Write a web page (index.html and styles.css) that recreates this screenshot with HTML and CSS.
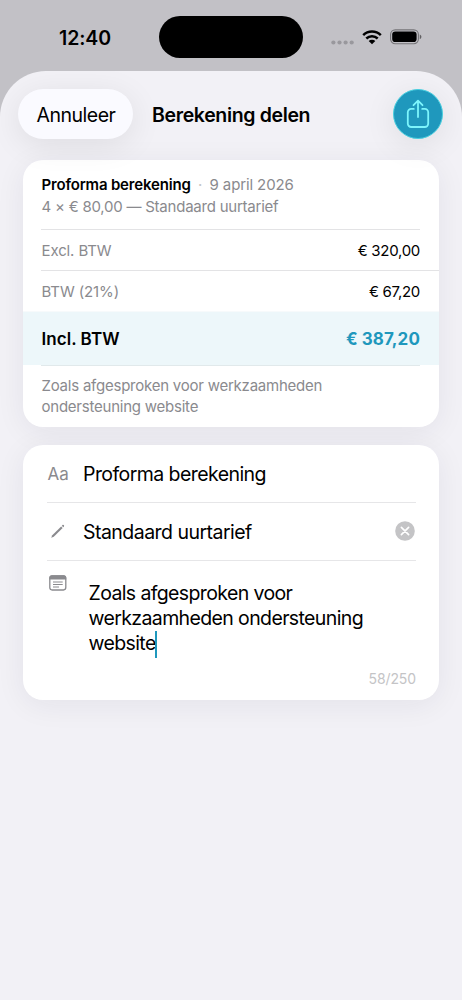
FILE: index.html
```html
<!DOCTYPE html>
<html lang="nl">
<head>
<meta charset="utf-8">
<meta name="viewport" content="width=device-width">
<title>Berekening delen</title>
<link rel="stylesheet" href="styles.css">
</head>
<body>
<div class="status">
  <div class="clock"><span class="time">12:40</span></div>
  <div class="island"></div>
  <div class="indicators">
    <svg class="dots" width="24" height="5" viewBox="0 0 24 5"><circle cx="2.4" cy="2.5" r="2.1"/><circle cx="8.5" cy="2.5" r="2.1"/><circle cx="14.6" cy="2.5" r="2.1"/><circle cx="20.7" cy="2.5" r="2.1"/></svg>
    <svg class="wifi" width="20" height="15" viewBox="0 0 20 15"><path d="M1.2 5.1a12.6 12.6 0 0 1 17.6 0M4.3 8.5a8.2 8.2 0 0 1 11.4 0" fill="none" stroke="#000" stroke-width="2.5"/><path d="M6.7 11.1a4.7 4.7 0 0 1 6.6 0L10 14.3z" fill="#000"/></svg>
    <svg class="battery" width="32" height="16" viewBox="0 0 32 16"><rect x=".6" y=".9" width="27.8" height="13.8" rx="4.6" fill="none" stroke="#000" stroke-opacity=".4" stroke-width="1.1"/><rect x="2.2" y="2.4" width="24.4" height="10.7" rx="3.1"/><path d="M29.8 5.4v4.8c1-.4 1.600-1.300 1.600-2.400s-.6-2-1.600-2.400z" fill-opacity=".5"/></svg>
  </div>
</div>
<main class="sheet">
  <header class="toolbar">
    <button class="cancel"><span class="cancel-label">Annuleer</span></button>
    <h1 class="title">Berekening delen</h1>
    <button class="share" aria-label="Deel">
      <svg width="26" height="30" viewBox="0 0 26 30" fill="none" stroke="#7df5fc" stroke-width="1.8" stroke-linecap="round" stroke-linejoin="round"><path d="M8.800 9.900H6.200a3.400 3.400 0 0 0-3.400 3.400v11.300a3.400 3.400 0 0 0 3.400 3.400h13.600a3.400 3.400 0 0 0 3.400-3.400V13.300a3.400 3.400 0 0 0-3.400-3.400h-2.600M13 18V2M8.500 6.200L13 1.700l4.500 4.500"/></svg>
    </button>
  </header>
  <section class="card summary">
    <div class="intro">
      <div class="line"><strong class="name">Proforma berekening</strong><span class="dot">·</span><span class="date">9 april 2026</span></div>
      <div class="line"><span class="detail">4 × € 80,00 — Standaard uurtarief</span></div>
    </div>
    <div class="row excl"><span class="label-excl">Excl. BTW</span><span class="amount">€ 320,00</span></div>
    <div class="row vat"><span class="label-vat">BTW (21%)</span><span class="amount">€ 67,20</span></div>
    <div class="row total"><span class="label-total">Incl. BTW</span><span class="amount-total">€ 387,20</span></div>
    <p class="remark"><span>Zoals afgesproken voor werkzaamheden</span><br><span>ondersteuning website</span></p>
  </section>
  <section class="card form">
    <div class="field">
      <span class="icon aa">Aa</span><span class="value">Proforma berekening</span>
    </div>
    <div class="field second">
      <span class="icon"><svg width="15" height="15" viewBox="0 0 16 16" fill="#8a8a8e"><path d="M1.300 14.700l1.100-2.700L11.900 2.600l1.600 1.600-9.500 9.400z"/><path d="M12.600 1.900l.8-.8c.8-.7 2.200.6 1.500 1.500l-.8.9z"/></svg></span><span class="value">Standaard uurtarief</span>
      <svg class="clear" width="20" height="20" viewBox="0 0 20 20"><circle cx="10" cy="10" r="9.800" fill="#c4c4c6"/><path d="M6.400 6.400l7.200 7.200M13.600 6.400l-7.200 7.200" stroke="#fff" stroke-width="1.700" stroke-linecap="round"/></svg>
    </div>
    <div class="note">
      <svg class="note-icon" width="18" height="16" viewBox="0 0 18 16"><rect x=".8" y=".8" width="16" height="14.200" rx="2.400" fill="none" stroke="#8a8a8e" stroke-width="1.300"/><path d="M.4 4.400V2.800A2.500 2.500 0 0 1 2.900.3h11.800a2.500 2.500 0 0 1 2.500 2.500v1.600z" fill="#8a8a8e"/><path d="M4 7h9.700M4 9.500h9.700M4 12h6" stroke="#8a8a8e" stroke-width="1"/></svg>
      <div class="note-text"><span>Zoals afgesproken voor</span><br><span>werkzaamheden ondersteuning</span><br><span>website</span><i class="caret"></i></div>
    </div>
    <div class="counter"><span>58/250</span></div>
  </section>
</main>
</body>
</html>
```

FILE: styles.css
```css
* { box-sizing: border-box; }
body {
  margin: 0;
  height: 1000px;
  overflow: hidden;
  display: flex;
  flex-direction: column;
  background: #c2c1c6;
  color: #000;
  font-family: Inter, "Liberation Sans", sans-serif;
  font-size: 15px;
}
span, strong { white-space: nowrap; }
button { border: 0; padding: 0; font: inherit; color: inherit; }
.status { height: 71px; flex: none; display: grid; grid-template-columns: 159px 144px 159px; }
.clock { padding: 26px 0 0 59px; line-height: 24px; font-size: 19.5px; font-weight: 600; }
.time { letter-spacing: -.1px; }
.island { margin-top: 16px; height: 42px; border-radius: 21px; background: #000; }
.indicators { display: flex; align-items: flex-start; padding-left: 28px; }
.dots { margin-top: 40px; fill: #99989d; flex: none; }
.wifi { margin: 30px 0 0 7px; flex: none; }
.battery { margin: 29px 0 0 8px; flex: none; }
.sheet { flex: 1; background: #f2f1f6; border-radius: 46px 46px 0 0; padding: 18px 23px 0; overflow: hidden; }
.toolbar { height: 50px; margin: 0 -5px; display: flex; align-items: center; padding-right: 1px; }
.cancel { width: 115px; height: 50px; border-radius: 25px; background: #fafaff; box-shadow: 0 6px 32px rgba(0,0,0,.085); font-size: 19.5px; padding: 2px 0 0 1px; }
.cancel-label { letter-spacing: -.5px; }
.title { margin: 0 auto 0 19px; padding-top: 2px; font-size: 19.5px; font-weight: 600; letter-spacing: -.35px; white-space: nowrap; }
.share { width: 50px; height: 50px; border-radius: 50%; background: #1f98bd; border: 1px solid #49cfdf; box-shadow: 0 6px 32px rgba(0,0,0,.085); display: grid; place-items: center; }
.card { background: #fff; border-radius: 20px; overflow: hidden; box-shadow: 0 5px 30px rgba(30,25,60,.065); }
.summary { margin-top: 21px; height: 267px; }
.intro { height: 69px; padding: 14px 0 0 18.5px; color: #8a8a8e; }
.line { display: flex; height: 21.5px; line-height: 22px; font-size: 15px; }
.name { color: #000; font-weight: 600; letter-spacing: -.18px; }
.dot { width: 19px; text-align: center; color: #c4c4c6; }
.date { letter-spacing: -.12px; }
.detail { letter-spacing: -.23px; }
.row { display: flex; justify-content: space-between; align-items: center; padding: 0 19px 0 .5px; margin-left: 18px; height: 41px; border-top: 1px solid #e3e3e5; }
.excl { margin-right: 19px; padding-right: 0; }
.label-excl, .label-vat { color: #8a8a8e; letter-spacing: -.12px; }
.amount { letter-spacing: -.28px; }
.total { height: 54px; margin: 0; padding: 0 19px 0 18.5px; background: #edf7fa; background-clip: padding-box; border-top: 1px solid #f7fafb; font-weight: 600; font-size: 17px; }
.label-total { letter-spacing: .05px; }
.amount-total { color: #1f98bd; font-weight: 700; letter-spacing: .1px; }
.remark { margin: 0 19px 0 18px; border-top: 1px solid #e1e9eb; padding: 9px 0 0 .5px; line-height: 21px; color: #8a8a8e; letter-spacing: -.23px; }
.form { margin-top: 18px; height: 255px; padding: 0 23px 0 24px; }
.field { height: 58px; display: flex; align-items: center; border-bottom: 1px solid #e6e6e8; font-size: 19.5px; }
.second { height: 57.5px; }
.value { letter-spacing: -.57px; }
.second .value { padding-top: 1px; letter-spacing: -.53px; }
.icon { width: 36px; flex: none; color: #8a8a8e; display: flex; padding-left: 3px; }
.aa { font-size: 17px; padding-left: .5px; }
.clear { margin-left: auto; margin-right: 1px; }
.note { display: flex; padding-top: 14px; }
.note-icon { flex: none; margin-left: 1.5px; }
.note-text { margin: 6px 0 0 22px; font-size: 19.5px; line-height: 25px; letter-spacing: -.62px; white-space: nowrap; }
.caret { display: inline-block; width: 2px; height: 27px; margin: -2px 0 -2px -.5px; vertical-align: middle; background: #1f98bd; }
.counter { text-align: right; color: #c4c4c6; font-size: 14px; line-height: 18px; margin-top: 14px; letter-spacing: -.1px; }
```
